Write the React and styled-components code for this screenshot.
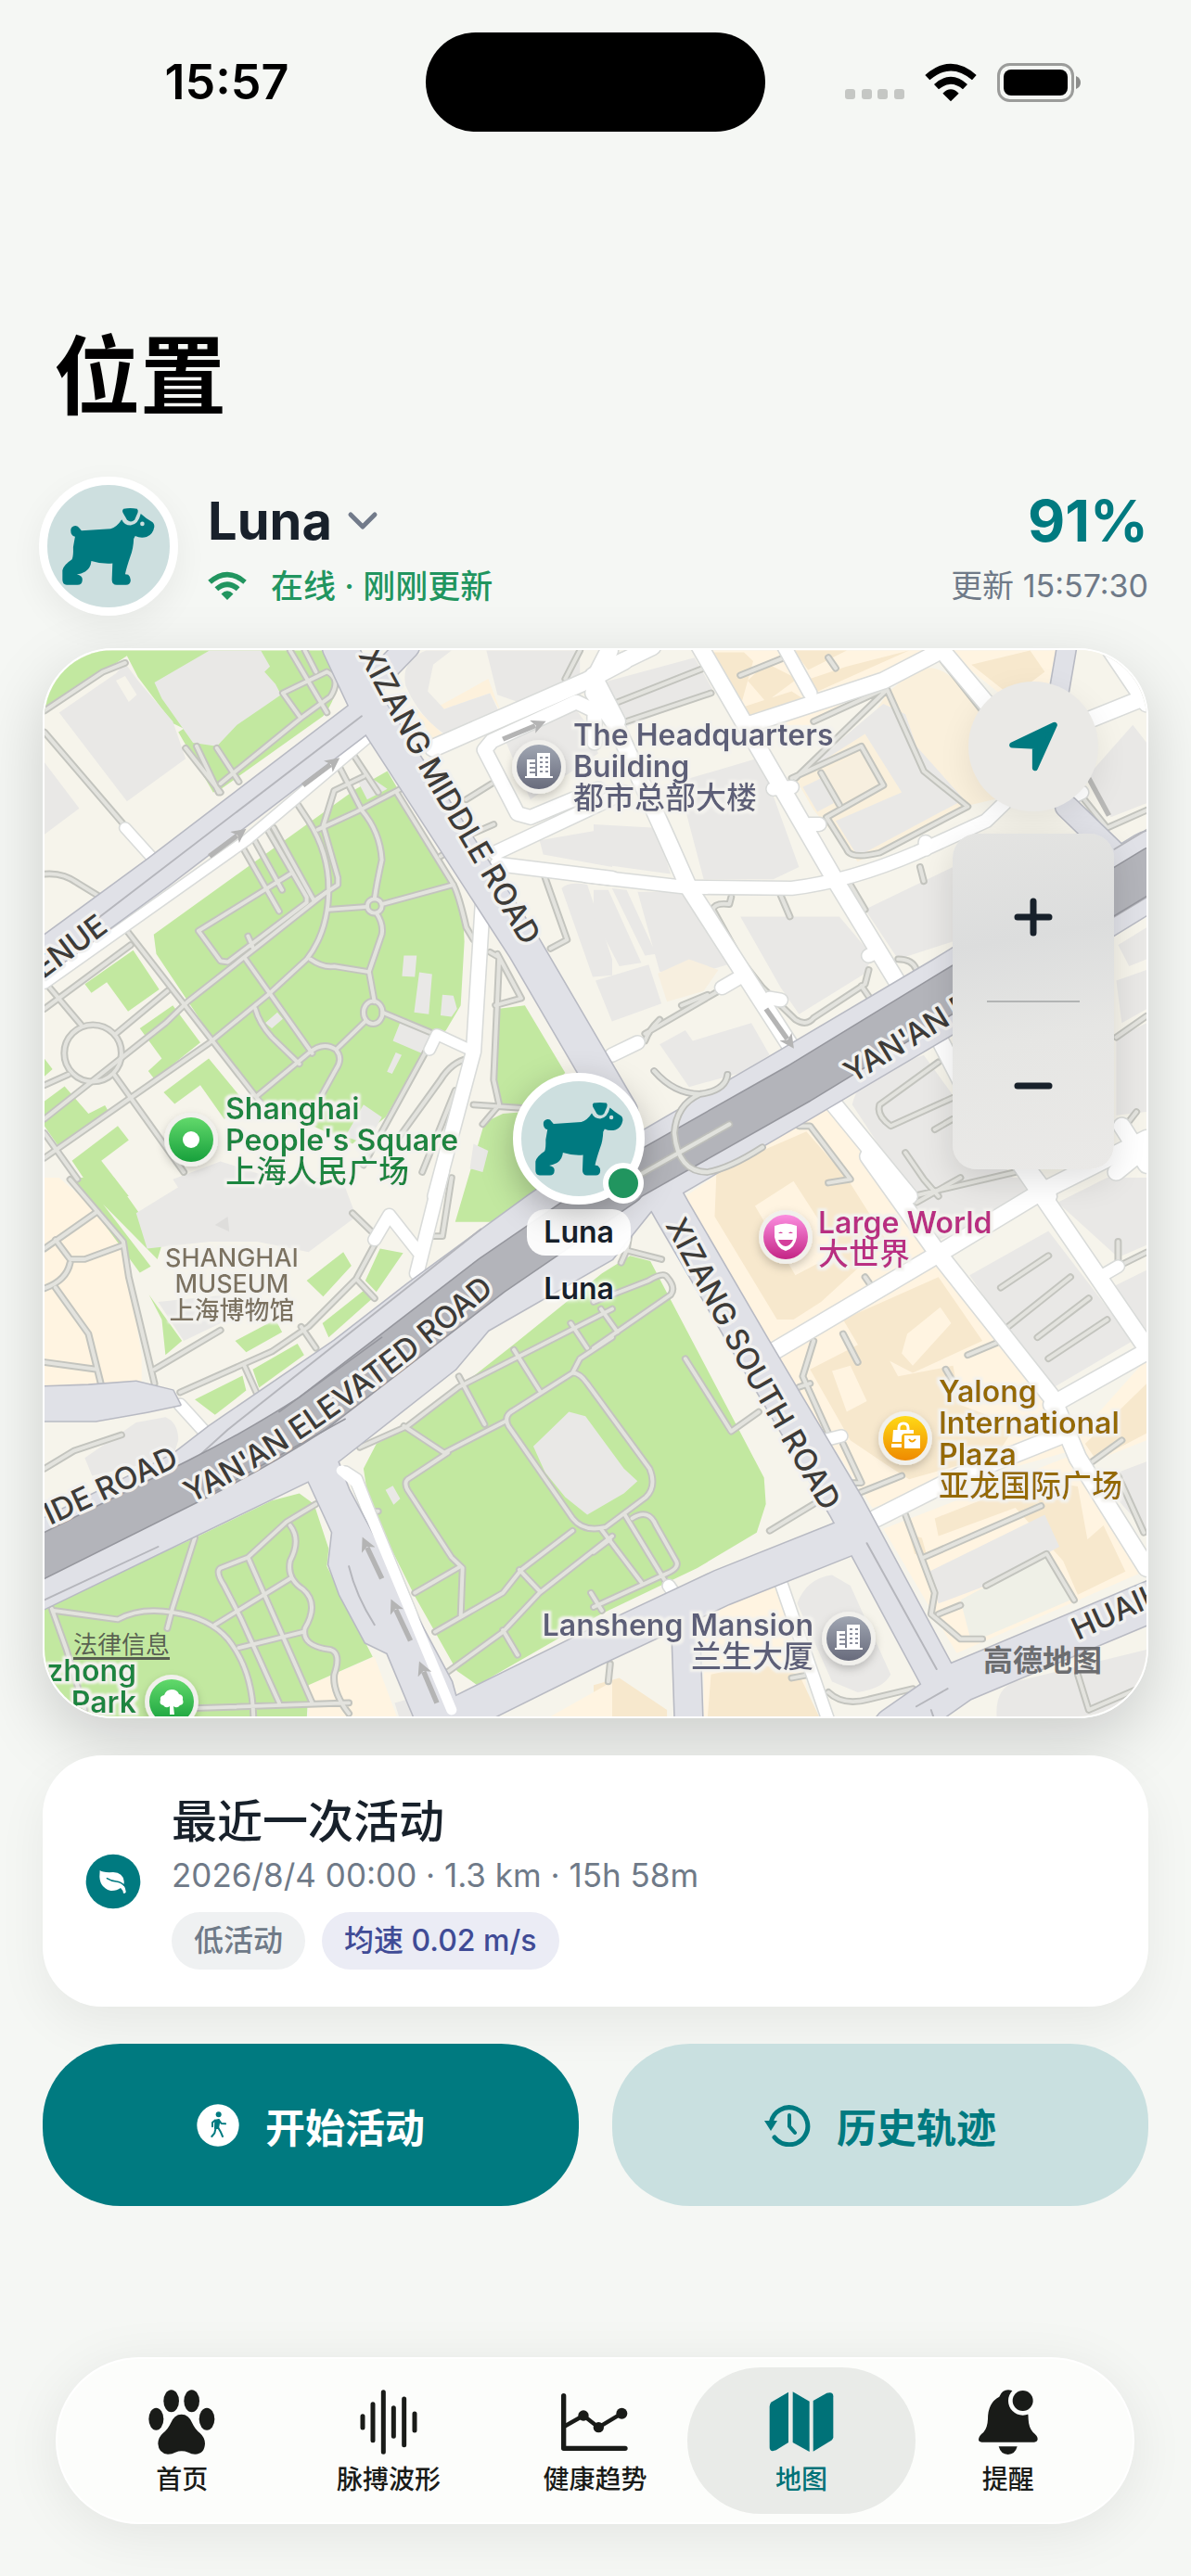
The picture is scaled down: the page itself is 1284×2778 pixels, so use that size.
import React from "react";
import styled, { createGlobalStyle } from "styled-components";

const colors = {
  background: "#f5f7f4",
  ink: "#18212b",
  muted: "#6f7a88",
  teal: "#007a80",
  tealSoft: "#c9e0e0",
  avatar: "#cddfdf",
  online: "#21955f",
  white: "#ffffff",
};

const GlobalStyle = createGlobalStyle`
  * {
    box-sizing: border-box;
  }

  body {
    margin: 0;
    background: ${colors.background};
    font-family: Inter, "Noto Sans CJK SC", sans-serif;
    color: ${colors.ink};
  }

  button {
    font: inherit;
    color: inherit;
    border: none;
    padding: 0;
    background: none;
    cursor: pointer;
  }

  a {
    color: inherit;
    text-decoration: none;
  }

  svg {
    display: block;
    flex: none;
  }
`;

const Page = styled.div`
  display: flex;
  flex-direction: column;
  min-height: 100vh;
  padding-bottom: 56px;
`;

const StatusBar = styled.header`
  display: grid;
  grid-template-columns: 1fr 366px 1fr;
  align-items: center;
  padding-top: 35px;
`;

const Clock = styled.time`
  padding-left: 30px;
  text-align: center;
  font-size: 52px;
  line-height: 60px;
  font-weight: 600;
  color: #000;
`;

const Island = styled.div`
  height: 107px;
  border-radius: 54px;
  background: #000;
`;

const StatusIcons = styled.div`
  display: flex;
  align-items: flex-end;
  justify-content: flex-end;
  gap: 22px;
  padding-right: 118px;
  color: #000;
`;

const Title = styled.h1`
  margin: 0;
  padding: 198px 58px 0;
  font-size: 93px;
  line-height: 132px;
  font-weight: 700;
  color: #000;
`;

const Content = styled.main`
  display: flex;
  flex-direction: column;
  gap: 40px;
  padding: 42px 46px 0;
`;

const PetHeader = styled.section`
  display: flex;
  align-items: center;
  gap: 32px;
  margin: 0 0 -5px -4px;
`;

const Avatar = styled.div`
  position: relative;
  display: flex;
  align-items: center;
  justify-content: center;
  width: ${({ $size }) => $size}px;
  height: ${({ $size }) => $size}px;
  border: 9px solid ${colors.white};
  border-radius: 50%;
  background: ${colors.avatar};
  box-shadow: 0 12px 36px rgba(0, 0, 0, ${({ $shadow }) => $shadow});
`;

const PetInfo = styled.div`
  display: flex;
  flex-direction: column;
  align-items: ${({ $end }) => ($end ? "flex-end" : "flex-start")};
  flex: ${({ $end }) => ($end ? "none" : "1")};
  gap: 16px;
  padding-top: 6px;
`;

const NameButton = styled.button`
  display: flex;
  align-items: center;
  gap: 16px;
  font-size: 56px;
  line-height: 64px;
  font-weight: 700;
`;

const Online = styled.div`
  display: flex;
  align-items: center;
  gap: 26px;
  font-size: 35px;
  line-height: 44px;
  font-weight: 500;
  color: ${colors.online};
`;

const Battery = styled.strong`
  font-size: 62px;
  line-height: 64px;
  font-weight: 700;
  color: ${colors.teal};
`;

const Updated = styled.time`
  font-size: 34px;
  line-height: 44px;
  color: ${colors.muted};
`;

const MapCard = styled.section`
  position: relative;
  height: 1154px;
  overflow: hidden;
  border: 2px solid ${colors.white};
  border-radius: 76px;
  background: #f6f4eb;
`;

const MapShadow = styled.div`
  border-radius: 76px;
  box-shadow: 0 24px 70px rgba(0, 0, 0, 0.17);
`;

const MapSvg = styled.svg`
  width: 100%;
  height: 100%;
  font-family: Inter, "Noto Sans CJK SC", sans-serif;
`;

const MapControls = styled.div`
  position: absolute;
  top: 34px;
  right: 35px;
  display: flex;
  flex-direction: column;
  align-items: center;
  gap: 24px;
`;

const LocateButton = styled.button`
  display: flex;
  align-items: center;
  justify-content: center;
  width: 140px;
  height: 140px;
  border-radius: 50%;
  background: #eae9e6;
  color: ${colors.teal};
  box-shadow: 0 12px 36px rgba(0, 0, 0, 0.08);
`;

const ZoomPanel = styled.div`
  display: flex;
  flex-direction: column;
  align-items: center;
  width: 174px;
  border-radius: 26px;
  background: linear-gradient(170deg, #e4e4e2, #dcdddd 32%, #e6e6e4 60%, #eae9e7);
  box-shadow: 0 12px 36px rgba(0, 0, 0, 0.12);
`;

const ZoomButton = styled.button`
  display: flex;
  align-items: center;
  justify-content: center;
  width: 100%;
  height: 180px;
`;

const ZoomDivider = styled.div`
  width: 100px;
  height: 2px;
  background: #b2b4b4;
`;

const PetMarker = styled.div`
  position: absolute;
  top: 456px;
  left: 48.5%;
  display: flex;
  flex-direction: column;
  align-items: center;
  transform: translateX(-50%);
  font-size: 32px;
  line-height: 50px;
  font-weight: 600;
`;

const MarkerDot = styled.span`
  position: absolute;
  right: -8px;
  bottom: -8px;
  width: 44px;
  height: 44px;
  border: 6px solid ${colors.white};
  border-radius: 50%;
  background: ${colors.online};
`;

const MarkerPill = styled.span`
  margin: 5px 0 11px;
  padding: 0 18px;
  border-radius: 20px;
  background: rgba(255, 255, 255, 0.94);
`;

const MarkerName = styled.span`
  text-shadow: 0 0 4px #fff, 0 0 4px #fff, 0 0 6px #fff, 0 0 6px #fff;
`;

const LegalLink = styled.a`
  position: absolute;
  left: 31px;
  bottom: 58px;
  font-size: 26px;
  line-height: 38px;
  color: rgba(60, 60, 60, 0.8);
  text-decoration: underline;
  text-decoration-thickness: 3px;
  text-underline-offset: 4px;
`;

const MapBrand = styled.span`
  position: absolute;
  right: 48px;
  bottom: 38px;
  font-size: 32px;
  line-height: 44px;
  font-weight: 700;
  color: #6c6d70;
`;

const ActivityCard = styled.section`
  display: flex;
  align-items: center;
  gap: 33px;
  padding: 40px 46px;
  border-radius: 64px;
  background: ${colors.white};
  box-shadow: 0 20px 54px rgba(0, 0, 0, 0.06);
`;

const ActivityBody = styled.div`
  display: flex;
  flex-direction: column;
`;

const ActivityTitle = styled.h2`
  margin: 0;
  font-size: 49px;
  line-height: 64px;
  font-weight: 500;
`;

const ActivityMeta = styled.p`
  margin: 0 0 14px;
  font-size: 35px;
  line-height: 51px;
  color: ${colors.muted};
`;

const Tags = styled.div`
  display: flex;
  gap: 18px;
`;

const Tag = styled.span`
  padding: 0 24px;
  border-radius: 31px;
  font-size: 32px;
  line-height: 62px;
  font-weight: 500;
  color: ${({ $accent }) => ($accent ? "#404b96" : colors.muted)};
  background: ${({ $accent }) => ($accent ? "#ebecf5" : "#eff1f2")};
`;

const Actions = styled.div`
  display: grid;
  grid-template-columns: 1fr 1fr;
  gap: 36px;
`;

const ActionButton = styled.button`
  display: flex;
  align-items: center;
  justify-content: center;
  gap: 28px;
  height: 175px;
  border-radius: 84px;
  font-size: 43px;
  font-weight: 700;
  color: ${({ $primary }) => ($primary ? colors.white : colors.teal)};
  background: ${({ $primary }) => ($primary ? colors.teal : colors.tealSoft)};
`;

const TabBar = styled.nav`
  display: flex;
  margin: auto 61px 0 60px;
  padding: 0 23px;
  border: 2px solid ${colors.white};
  border-radius: 90px;
  background: #fcfdfb;
  box-shadow: 0 10px 60px rgba(0, 0, 0, 0.08);
`;

const Tab = styled.a`
  position: relative;
  z-index: 0;
  display: flex;
  flex: 1;
  flex-direction: column;
  align-items: center;
  gap: 8px;
  padding: 33px 0 27px;
  font-size: 28px;
  line-height: 38px;
  font-weight: 500;
  color: ${({ $active }) => ($active ? "#007278" : "#191b18")};

  &::before {
    content: "";
    position: absolute;
    inset: 9px -12px;
    z-index: -1;
    border-radius: 79px;
    background: ${({ $active }) => ($active ? "#e9ebe8" : "transparent")};
  }
`;

/* ---------- icons ---------- */

const Dog = ({ width = 100 }) => (
  <svg width={width} viewBox="110 140 302 256" fill={colors.teal}>
    <path d="M138 216A15 15 0 0 1 166 208L173 216L268 210Q288 205 304 180Q312 199 333 199Q358 196 366 161Q385 178 400 186Q411 192 410 204Q406 228 385 237Q365 242 348 234L343 243Q342 275 332 300Q320 335 315 358L325 360Q333 366 333 378Q332 393 318 393H288Q272 392 272 376L274 323Q240 326 205 315Q203 338 185 350Q172 357 158 359Q176 362 176 376Q175 393 160 393H125Q111 391 111 376V345Q115 328 142 310Q147 300 146 270L152 236Q138 232 138 216Z" />
    <path d="M310 145Q332 141 354 145Q359 150 356 158L346 181Q334 193 321 181L308 158Q304 150 310 145Z" />
    <circle cx="371" cy="194" r="7" fill={colors.avatar} />
  </svg>
);

const Wifi = ({ width }) => (
  <svg width={width} viewBox="590 80 168 125" fill="currentColor">
    <path d="M591 119Q674 46 757 119L743 135Q674 76 606 135Z" />
    <path d="M620 149Q674 100 728 149L713 165Q674 132 635 165Z" />
    <path d="M648 178Q674 152 700 178L674 204Z" />
  </svg>
);

const Signal = () => (
  <svg width="64" height="14" viewBox="0 0 64 14" fill="#c5c7c4">
    {[0, 18, 35, 53].map((x) => (
      <rect key={x} x={x} width="11" height="11" rx="3" />
    ))}
  </svg>
);

const BatteryIcon = () => (
  <svg width="91" height="42" viewBox="0 0 91 42">
    <rect x="1.5" y="1.5" width="80" height="39" rx="12" fill="none" stroke="#9b9c9a" strokeWidth="3" />
    <rect x="7" y="7" width="69" height="28" rx="8" />
    <path d="M85 14Q90 16 90 21T85 28Z" fill="#8c8d8b" />
  </svg>
);

const Chevron = () => (
  <svg width="34" height="22" viewBox="0 0 34 22" fill="none" stroke="#727b8a" strokeWidth="5" strokeLinecap="round" strokeLinejoin="round">
    <path d="M4 4L17 17L30 4" />
  </svg>
);

const Arrow = () => (
  <svg width="54" height="54" viewBox="1126 230 142 142" fill="currentColor" stroke="currentColor" strokeWidth="16" strokeLinejoin="round">
    <path d="M1137 297L1257 240L1202 362V300Z" />
  </svg>
);

const Plus = ({ minus }) => (
  <svg width="42" height="42" viewBox="0 0 42 42" stroke={colors.ink} strokeWidth="7" strokeLinecap="round">
    <path d={minus ? "M4 21H38" : "M4 21H38M21 4V38"} />
  </svg>
);

const Leaf = () => (
  <svg width="60" height="60" viewBox="94 57 180 180">
    <circle cx="184" cy="147" r="88" fill={colors.teal} />
    <path d="M141 111Q150 119 184 117Q216 119 219 146Q220 152 217 158Q226 170 225 182Q220 187 217 185Q216 175 208 168Q195 178 176 177Q142 168 140 132Z" fill="#fff" />
    <path d="M164 137Q178 146 194 147Q210 149 219 160" fill="none" stroke={colors.teal} strokeWidth="4" strokeLinecap="round" />
  </svg>
);

const Walker = () => (
  <svg width="46" height="46" viewBox="461 871 138 138" fill="none" strokeLinecap="round" strokeLinejoin="round">
    <circle cx="530" cy="940" r="68" fill="#fff" />
    <circle cx="532" cy="905" r="9" fill={colors.teal} />
    <path d="M521 923L533 921L534 932L531 950H520Z" fill={colors.teal} stroke={colors.teal} strokeWidth="4" />
    <path d="M531 948L538 960L545 976M522 952L519 965L510 976M520 924L512 931V944M533 923L541 934L554 935" stroke={colors.teal} strokeWidth="6" />
  </svg>
);

const History = () => (
  <svg width="50" height="46" viewBox="0 0 50 46" fill="none" stroke="currentColor" strokeWidth="5" strokeLinecap="round">
    <path d="M7 21A20 20 0 1 1 11 36" />
    <path d="M27 12V24L33 31" strokeWidth="4" />
    <path d="M0 18H14L7 29Z" fill="currentColor" stroke="none" />
  </svg>
);

const Paw = () => (
  <svg width="72" height="70" viewBox="62 51 214 210" fill="currentColor">
    <ellipse cx="86" cy="146" rx="24" ry="36" />
    <ellipse cx="135" cy="88" rx="25" ry="36" />
    <ellipse cx="201" cy="88" rx="25" ry="36" />
    <ellipse cx="250" cy="146" rx="25" ry="36" />
    <path d="M168 131Q192 131 203 160Q212 180 228 192Q244 206 244 226Q242 260 212 260Q200 260 190 254Q168 246 148 254Q138 260 124 260Q94 258 92 226Q92 206 108 192Q124 180 133 160Q144 131 168 131Z" />
  </svg>
);

const Pulse = () => (
  <svg width="72" height="70" viewBox="731 50 216 210" stroke="currentColor" strokeWidth="15" strokeLinecap="round">
    <path d="M755 136V173M788 97V214M822 58V252M855 109V201M889 80V229M923 128V182" />
  </svg>
);

const Trend = () => (
  <svg width="72" height="70" viewBox="1399 50 216 210" fill="none" stroke="currentColor" strokeLinecap="round" strokeLinejoin="round">
    <path d="M1407 70V240H1606" strokeWidth="16" />
    <path d="M1413 167L1471 134L1520 172L1595 127" strokeWidth="13" />
    <g fill="currentColor" stroke="none">
      <circle cx="1471" cy="134" r="17" />
      <circle cx="1520" cy="172" r="17" />
      <circle cx="1595" cy="127" r="18" />
    </g>
  </svg>
);

const MapIcon = () => (
  <svg width="72" height="70" viewBox="562 50 216 210" fill="currentColor">
    <path d="M628 58V221L588 246Q567 254 567 236V104Q567 95 574 90Z" />
    <path d="M642 57L696 88V251L642 221Z" />
    <path d="M708 86L752 61Q773 55 773 72V204Q773 210 767 214L708 250Z" />
  </svg>
);

const Bell = () => (
  <svg width="72" height="70" viewBox="1234 50 216 210" fill="currentColor">
    <path d="M1246 212Q1246 200 1262 188Q1275 172 1276 145Q1276 92 1313 73Q1322 51 1342 51Q1362 51 1370 73Q1407 95 1407 145Q1408 172 1422 188Q1437 200 1437 210Q1436 220 1426 220H1256Q1246 219 1246 212Z" />
    <path d="M1311 234H1371Q1364 260 1341 260Q1318 260 1311 234Z" />
    <circle cx="1389" cy="86" r="47" fill="#fcfdfb" />
    <circle cx="1389" cy="86" r="33" />
  </svg>
);

/* ---------- map data, split in four sheets ---------- */

const sheets = {
  nw: "translate(-8 -11) scale(0.3954 0.3827)",
  ne: "translate(592 -11) scale(0.3954 0.3827)",
  sw: "translate(-8 569) scale(0.3954 0.3827)",
  se: "translate(592 569) scale(0.3954 0.3827)",
};

const GREEN = "#c2e8a0";
const GREY = "#e9e8e6";
const CREAM = "#fff4e1";
const SAND = "#f7e8cd";

// [sheet, fill, outline]
const areas = [
  ["nw", GREEN, "M20 30H420L275 105L245 45L20 200ZM275 105L410 30H780L820 110Q815 170 780 215L495 425L480 430L385 260L400 250L370 235Z"],
  ["nw", GREEN, "M318 830L870 420L955 370L1130 680Q1165 760 1165 850L1155 1030L1115 1100L1055 1160L950 1345L860 1420L590 1295L325 885Z"],
  ["nw", GREEN, "M130 970L262 875L333 985L248 1047L190 965L148 995ZM280 1095L370 1030L445 1135L320 1238L303 1215L340 1180ZM345 1275L468 1180L580 1320L510 1350L445 1255L375 1308Z"],
  ["nw", GREEN, "M20 1300L75 1258L140 1335L185 1312L198 1335L65 1437L20 1370ZM95 1468L220 1370L250 1410L175 1468L250 1568H160ZM20 1180L42 1210L20 1230Z"],
  ["nw", GREEN, "M1255 1040L1330 1030L1440 1220L1330 1320L1260 1310L1240 1240ZM1220 1360L1270 1335L1330 1330L1400 1560L1290 1640H1140Z"],
  ["nw", GREY, "M60 205L215 95L240 65L275 115L370 230L405 335L245 455ZM320 120L470 30H610L635 75L620 90L650 125L665 155L545 240L490 300L425 290L340 165ZM20 345L115 475L20 548Z"],
  ["nw", "#f6f4eb", "M215 115L240 102L272 155L250 175Z"],
  ["nw", GREY, "M1000 890H1035L1030 950L995 948ZM1042 937L1077 942L1068 1055L1028 1050ZM1105 1000L1135 1003L1145 1040L1130 1062L1100 1058ZM990 1078L1072 1112L1048 1165L970 1130ZM978 1163L994 1170L968 1223L954 1217ZM875 400L905 385L955 420L900 450ZM622 1080L655 1050L670 1068L640 1095Z"],
  ["nw", "#fdf1dc", "M1090 190L1230 110L1265 205L1235 150L1110 195ZM1020 180L1110 270L1085 290Z"],
  ["nw", GREY, "M1005 130Q990 60 1060 30H1130L1080 70L1065 145L1110 195L1235 150L1260 205L1160 260L1110 265Q1040 215 1005 130ZM1225 30H1480V105L1325 180L1255 155ZM1275 280L1465 190L1500 240L1530 320L1345 450ZM1370 565L1568 530V640L1380 605ZM1430 700Q1450 680 1500 690L1568 900V945L1515 950Z"],
  ["nw", GREY, "M890 1310L940 1345L900 1420L840 1400ZM1190 1420L1230 1440L1215 1500L1180 1490ZM370 1520L500 1470L800 1568H400Z"],
  ["ne", CREAM, "M310 30H930L790 100L590 240L420 240ZM960 30H1260L1240 130L1130 170Z"],
  ["ne", SAND, "M320 35H410L435 60L400 190ZM470 65L555 110L470 175L420 115ZM405 190L540 145L570 165L420 235ZM545 30H690L585 85ZM590 110L690 75L860 30L600 150ZM1030 70L1190 30L1230 90L1140 160Z"],
  ["ne", "#faf0dc", "M550 390L740 250L800 150L870 90Q930 60 980 110L1080 230L1130 440L1010 470L720 625L600 480Z"],
  ["ne", GREY, "M25 120L275 50L330 150L75 250ZM230 400L460 330L490 440L560 640L490 675H300ZM550 390L790 180L850 210L880 300L1010 450L720 610L660 510L840 430L740 265Z"],
  ["ne", GREY, "M570 415L620 390L655 460L610 485ZM0 520L170 530L210 660L0 630ZM400 780L670 780L760 890L740 940L560 1055L510 980ZM740 760L980 640V850L830 900ZM0 705H40L130 910L70 920L0 780ZM50 700L90 705L170 885L140 890ZM120 710H240L365 915L270 945L180 935Z"],
  ["ne", "#f7efdf", "M620 375L740 305L790 400L670 465ZM175 940L260 900L340 930L300 990L200 1020Z"],
  ["ne", GREY, "M5 960L150 915L185 1025L50 1075ZM180 1140L250 1100L270 1130L430 1080L480 1170L400 1220L260 1260ZM705 1310Q720 1240 790 1210L900 1170L1180 1568H870ZM1350 380L1470 240L1508 290V460L1410 500ZM1430 860L1508 810V900L1460 920ZM1425 960L1508 930V1040L1440 1080ZM1425 1120L1508 1080V1330L1425 1340Z"],
  ["se", CREAM, "M240 60L630 -220L790 0L930 210L490 475ZM500 510L950 240L1100 460L1250 620L1300 770L760 930ZM790 990L1310 780L1500 1110L990 1340ZM300 1220L500 1150L560 1260L590 1530H300ZM1310 740L1508 510V740L1360 800Z"],
  ["se", SAND, "M335 -20L580 -130L690 0L800 180L620 350L545 400H500L330 110ZM680 400L940 280L1060 460L870 550L720 470ZM590 540L770 445L830 560L980 530L1000 640L1150 700L1100 780L860 850L800 810L700 740Z"],
  ["se", CREAM, "M440 80L545 10L670 210L550 275ZM650 545L700 530L745 630L690 660ZM840 495L855 440L945 365L975 410L870 530Z"],
  ["se", SAND, "M930 960L1200 850L1320 870L1350 1040L1280 1080L1150 930L940 1010ZM1280 1080L1390 980L1450 1110L1320 1175ZM860 1005L895 1015L910 1070L875 1060ZM0 1430L70 1410L200 1500V1530H0ZM320 1400L450 1370L560 1400L620 1530H310ZM1340 750L1508 580V720L1370 795Z"],
  ["se", GREY, "M915 1110L1230 950L1270 1040L1070 1150L940 1200ZM840 0H1190L1210 60L930 180ZM1025 275L1240 150L1470 460L1240 600ZM1265 70L1400 0H1508V190L1430 225ZM1410 310L1508 260V450ZM1380 850L1508 800V1000ZM555 1200Q580 1130 650 1120L700 1150L810 1400Q790 1440 720 1450L650 1420ZM1100 1530Q1090 1440 1150 1420L1508 1330V1530Z"],
  ["se", "#eff0e7", "M1000 1190L1235 1060L1300 1190L1030 1310Z"],
  ["sw", CREAM, "M20 0H60L165 95L235 190L285 500V590H20ZM740 1430L920 1350L985 1530H740ZM1380 1530L1568 1420V1530Z"],
  ["sw", GREEN, "M890 820L925 750L1010 705L1140 600L1300 470L1540 270L1617 220L1672 235L1982 845L1987 920L1962 1000L1800 1100L1537 1230L1200 1430L1145 1390L1030 1180L905 920Z"],
  ["sw", GREEN, "M0 1220L430 1015L640 910L715 890L755 920L795 1045L790 1095L830 1180L895 1310L915 1350L740 1430L735 1530H0Z"],
  ["sw", GREEN, "M735 290L835 210L857 248L780 335ZM895 290L935 200L998 212L925 322ZM778 410L900 310L915 340L795 450ZM540 460L650 400L668 435L570 492ZM588 540L710 468L728 500L605 592ZM430 625L560 558L570 600L485 668ZM90 0H210L340 190L328 230L180 75L310 250L280 268ZM305 330L395 460L350 500L340 400Z"],
  ["sw", GREY, "M1353 757L1450 660L1495 672L1600 820L1637 855L1600 890L1500 950L1440 900L1385 830ZM270 100L380 30L430 0H830L870 110L740 210L600 180H470L300 200ZM330 350L520 330L500 410L400 460ZM130 790L270 690L350 675Q385 690 385 740L370 790L150 840ZM950 880L970 868L990 905L972 922ZM975 1480L1010 1470L1030 1530H990Z"],
  ["sw", "#dedddb", "M485 133L520 110L524 152Z"],
];

const footways = [
  ["nw", "M20 260L240 525M20 200L180 90L240 65M20 660Q70 655 110 685L165 720M245 820L640 1345M20 1040L255 860M30 975L120 1085M20 1255L85 1225M20 1350L350 1080L410 1020L570 890L790 710M355 990L215 1110M20 1460L468 1137L630 1000L735 900Q795 820 795 700Q795 600 740 510L705 455M210 1225L400 1500M20 1390L110 1520"],
  ["nw", "M74 1165A78 80 0 1 1 230 1165A78 80 0 1 1 74 1165M900 750A20 20 0 1 1 940 750A20 20 0 1 1 900 750M890 1050A26 32 0 1 1 942 1050A26 32 0 1 1 890 1050"],
  ["nw", "M735 740L520 908L500 905L440 820L690 660M735 740V725L620 520M555 575L660 765M585 550L668 705M645 530L755 735L820 690V670L780 525L810 425L890 385M575 835L590 870M765 535L870 485L1000 415M860 320L930 430M820 350L885 480Q935 540 940 620Q925 690 920 730M925 770Q945 800 940 830L905 935L920 1020M795 760L900 752M940 745L1135 690"],
  ["nw", "M745 900Q780 925 810 920L900 935M942 1050L1070 1105M895 1075L815 1155Q780 1130 740 1165L600 1285M815 1155Q835 1180 815 1210L775 1285M565 895L750 1165M595 1040Q605 1080 640 1120L715 1195M980 430L1135 690Q1150 720 1170 810L1190 845"],
  ["nw", "M1235 880L1260 895L1245 1240L1260 1310L1215 1365M1255 885L1320 1010L1250 1030M1190 1310L1330 1320M1170 450L1240 405M1190 545L1245 520M1100 610L1130 590M1385 670L1445 845L1400 870M1175 1180Q1130 1190 1100 1240L960 1440M1140 1270L1050 1500M1060 1160L890 1480"],
  ["nw", "M405 305L500 430M435 300L495 430M490 305L550 400M500 405L720 220L800 160Q830 110 790 90L670 150L715 215M690 30L790 205M730 30L760 90M1480 30L1440 110"],
  ["ne", "M55 180L300 80M60 240L320 150M400 100L520 50M550 390L800 140L900 370L1020 470L780 600Q700 620 690 590L635 500L790 410L730 300L540 390M620 375L670 465M790 140L600 230M930 30L1060 200M890 640L900 680M700 690L740 760M510 720L535 780M375 725L370 745Q330 740 325 760L400 900L460 980L550 1070Q580 1090 600 1065L740 970L750 930M730 975L760 1020M140 1130Q150 1100 180 1070M140 1110L340 990M240 1030L310 1000M830 900Q870 900 880 930M640 50L660 80"],
  ["ne", "M780 1310Q770 1340 810 1370L980 1290M780 1310L940 1190M930 1380L980 1350M850 1445L900 1520L940 1568M870 1568L1150 1500M640 1530L700 1520L590 1370L560 1370M1425 1120L1508 1060M1480 1330L1450 1370M1330 440L1400 530L1508 480"],
  ["se", "M20 370L65 435M0 480L210 330Q225 310 200 280Q190 265 150 290L0 350M75 240L90 205L185 230M90 205L110 80M250 510L375 715L450 660M480 995L600 920M85 950L200 1145M20 990L130 1140M105 960Q150 930 170 980L225 1080Q235 1100 200 1115L0 1210M45 1020L0 1055M680 440L720 520M600 460L570 560L640 720M560 590L590 580M680 750L730 860L700 860M720 890L840 840M1020 500L1100 465"],
  ["se", "M850 950L930 1170L920 1230L1000 1300L1060 1300M900 1070L1220 925M940 1230L1000 1205M1070 1150L1235 1060L1310 1190M1110 310L1240 220M1130 420L1300 280M1210 450L1350 340M1240 510L1400 400M880 70L1000 0M740 280L760 310M960 540L1000 610M1360 800L1440 740M1430 840L1500 1000M45 1370L40 1420M540 1410L590 1400M640 1450Q680 1490 750 1470L870 1440M1320 1400L1350 1500L1508 1430M1430 180V250L1508 210"],
  ["sw", "M20 200L165 95M50 175L90 230H130L235 190M90 5L235 180L250 280L320 580M90 240Q80 290 20 312M50 310L140 440L175 585M20 520L160 540M390 605L640 490L740 420L870 285L930 170M860 100L930 170M320 540L500 430M870 285L920 340M720 420L760 480M565 530L600 610M20 820L100 770L230 725M1130 0L1105 165H1080"],
  ["sw", "M430 1015L370 1210L355 1270M45 1220L220 1245Q280 1210 370 1225Q470 1240 520 1300Q590 1390 590 1530M40 1215L80 1330L130 1500M760 920L680 970L575 1070L500 1100Q485 1110 510 1150L555 1240L660 1480M575 1070L750 1480M690 980Q720 1020 690 1080Q680 1130 725 1160Q770 1200 730 1270Q720 1320 800 1330Q830 1340 810 1400Q805 1450 850 1510M485 1260L690 1130M550 1325L725 1280M430 1495L850 1480"],
  ["sw", "M880 760L1010 700L1150 590L1568 370M1000 700L1110 775L1280 685M1150 560L1220 695M1300 485L1370 600M1455 410L1500 480M1568 450L1480 510L1460 550L1300 655Q1270 670 1285 700L1460 960Q1490 1000 1550 985L1660 900Q1690 870 1670 820L1500 580Q1480 550 1460 550"],
  ["sw", "M1120 775L1010 850Q1000 860 1010 880L1130 1070L1160 1100L1155 1235M1030 1170L1155 1095M1085 1280L1270 1170L1320 1105L1460 995M1110 1400L1270 1280L1370 1170L1568 1010M1315 1105L1370 1165M1270 1275L1310 1345M1510 1170L1540 1220M870 940H930M1160 1480L1568 1270"],
];

// [sheet, width, outline]
const streets = [
  ["nw", 28, "M20 968L570 565L905 272"],
  ["nw", 46, "M1080 305L1500 115L1600 60M1520 110L1560 30M1520 110L1580 230"],
  ["nw", 38, "M1250 600L1600 430M1255 632L1568 672M1345 500L1310 490L1220 310L1240 285L1470 175L1520 200V290M1345 500L1530 420M1215 740L1190 1160L1085 1568"],
  ["nw", 28, "M1070 1155L1090 1112L1180 1155M240 530L310 610"],
  ["ne", 44, "M0 100L160 20M290 20L660 680L840 985M420 240L790 115L930 40M950 30L1080 190M0 150L60 240L200 560L260 700L540 1150M1340 230L1508 160M1410 30L1508 180M640 1290L860 1568"],
  ["ne", 36, "M-20 665L250 697L540 700Q700 680 880 600L1070 510L1120 460M520 20L590 150M350 980L400 950M480 1010L510 1015M50 1170L120 1135M490 420L540 415M590 520L615 520M905 570V590M750 890L770 880M1310 440L1330 430"],
  ["ne", 44, "M920 1080L1000 1240L1240 1568M1425 1500L1508 1430M1440 1370L1508 1480"],
  ["se", 46, "M490 490L940 215L1220 40L1508 -110M750 -60L940 215L1250 620L1320 790L1508 1100M1130 -90L1190 0L1508 480M1250 640L1508 490M770 960L1000 840L1290 720"],
  ["se", 32, "M630 740L675 728M510 1140L640 1530M1380 280L1430 250M205 1150L215 1165"],
  ["sw", 32, "M840 830L870 850L900 930L1130 1510M390 640L460 720M920 175L960 105L1040 210"],
  ["sw", 36, "M1105 -20L1035 270"],
];

const avenues = [
  ["nw", 92, "M0 905L330 655L900 205"],
  ["nw", 62, "M880 160L1010 20"],
  ["nw", 92, "M825 20L900 185L1330 870L1590 1330"],
  ["ne", 50, "M1290 20L1270 140"],
  ["ne", 60, "M1290 470L1440 620"],
  ["ne", 205, "M40 1560L530 1265L980 990L1530 640"],
  ["se", 98, "M120 -80L215 95L432 480L690 930L950 1430"],
  ["se", 100, "M-400 1530L0 1325L350 1155L690 1015"],
  ["se", 112, "M820 1550L1000 1420L1530 1190"],
  ["se", 74, "M250 1240L260 1550"],
];

const avenueAreas =
  "M0 970L370 780L470 700L810 460L1010 300L1340 50L1568 -110L1700 60L1568 230L1230 430L1140 540L820 800L850 880L1130 1420L1165 1550H1040L955 1340L895 1310L825 1175L795 1090L805 1000L740 855L430 1010L20 1215H0ZM0 590L140 585L270 575L370 600L390 640L300 660L160 685H0Z";

const elevated = [
  ["ne", "M30 1560L560 1250L980 985L1530 640"],
  ["sw", "M-20 1085L440 848Q600 765 750 665L1240 275L1600 20"],
];

const arrows = [
  ["nw", "M470 610L545 552"],
  ["nw", "M725 410L800 352"],
  ["nw", "M1270 280L1358 242"],
  ["ne", "M470 1040L528 1125"],
  ["sw", "M940 1130L900 1042"],
  ["sw", "M1018 1305L978 1217"],
  ["sw", "M1090 1480L1054 1392"],
];

const roadNames = [
  { id: "xizang-middle", text: "XIZANG MIDDLE ROAD", d: "M338 5L414 146L522 330L562 400" },
  { id: "xizang-south", text: "XIZANG SOUTH ROAD", d: "M669 620L751 776L871 985" },
  { id: "elevated", text: "YAN'AN ELEVATED ROAD", d: "M158 920Q312 845 542 642" },
  { id: "elevated-east", text: "YAN'AN EL", d: "M871 468L1188 275" },
  { id: "avenue", text: "ENUE", d: "M-260 548L70 302", end: true },
  { id: "side", text: "IDE ROAD", d: "M-200 1040L146 879", end: true },
  { id: "huaihai", text: "HUAIH", d: "M1114 1068L1330 970" },
];

const places = [
  { kind: "office", x: 533, y: 126, tx: 570, ty: 103, color: "#5d5f78", lines: ["The Headquarters", "Building", "都市总部大楼"] },
  { kind: "square", x: 158, y: 528, tx: 195, ty: 506, color: "#1f8540", lines: ["Shanghai", "People's Square", "上海人民广场"] },
  { kind: "theatre", x: 799, y: 633, tx: 834, ty: 629, color: "#b92f82", lines: ["Large World", "大世界"] },
  { kind: "shop", x: 928, y: 850, tx: 964, ty: 811, color: "#956b00", lines: ["Yalong", "International", "Plaza", "亚龙国际广场"] },
  { kind: "office", x: 867, y: 1066, tx: 829, ty: 1063, anchor: "end", color: "#5d5f78", lines: ["Lansheng Mansion", "兰生大厦"] },
  { kind: "park", x: 137, y: 1134, tx: 99, ty: 1112, anchor: "end", color: "#1f8540", lines: ["zhong", "Park"] },
];

const pinColors = {
  office: ["#a0a6b2", "#686b7c"],
  square: ["#62d96b", "#17a03c"],
  park: ["#62d96b", "#17a03c"],
  theatre: ["#fb8ee0", "#c42585"],
  shop: ["#ffd916", "#ef8a00"],
};

const pinGlyphs = {
  office: (
    <g>
      <path d="M-15 12V10H-13V-8H-4V10H-2V-15H12V10H15V12Z" fill="#fff" />
      <path d="M-10 -4H-4M-10 1H-4M-10 6H-4M1 -10H4M7 -10H10M1 -5H4M7 -5H10M1 0H4M7 0H10M1 5H4M7 5H10" stroke="#8a8e9c" strokeWidth="2" />
    </g>
  ),
  square: <circle r="9" fill="#fff" />,
  park: (
    <path d="M-2 14V5Q-6 8 -9 4Q-14 3 -12 -2Q-13 -6 -8 -7Q-6 -13 0 -13Q6 -13 8 -8Q13 -7 12 -2Q14 3 9 4Q6 8 2 5L3 14Z" fill="#fff" />
  ),
  theatre: (
    <g>
      <path d="M-12 -12Q0 -17 12 -12V0Q10 12 0 15Q-10 12 -12 0Z" fill="#fff" />
      <path d="M-8 -4Q-5 -7 -3 -4ZM3 -4Q5 -7 8 -4ZM-8 3H8Q5 10 0 10T-8 3Z" fill="#d43f9b" />
    </g>
  ),
  shop: (
    <g>
      <path d="M-7 -8V-11Q-7 -16 -2 -16T3 -11V-8" fill="none" stroke="#fff" strokeWidth="3" />
      <path d="M-13 -9H9V-5H0Q-4 -5 -4 -1V4H-14ZM-15 6H-4V10H-15ZM-1 -3H16V11H-1Z" fill="#fff" />
      <path d="M4 1Q7 6 11 1" fill="none" stroke="#f5a000" strokeWidth="2" />
    </g>
  ),
};

const Pin = ({ kind, x, y }) => (
  <g transform={`translate(${x} ${y})`}>
    <circle r="29" fill="#f1f0ec" filter="url(#soft)" />
    <circle r="24" fill={`url(#pin-${kind})`} />
    {pinGlyphs[kind]}
  </g>
);

const Strokes = ({ items, extra, color }) =>
  items.map(([sheet, width, d], index) => (
    <path key={index} transform={sheets[sheet]} d={d} stroke={color} strokeWidth={width + extra} />
  ));

const isChinese = (text) => text.charCodeAt(0) > 255;

const CityMap = () => (
  <MapSvg viewBox="0 0 1188 1150" preserveAspectRatio="xMidYMid slice" role="img" aria-label="地图">
    <defs>
      <filter id="soft" x="-50%" y="-50%" width="200%" height="200%">
        <feDropShadow dx="0" dy="4" stdDeviation="5" floodOpacity="0.2" />
      </filter>
      {/* pale outline behind a whole label, so lines never cover each other */}
      <filter id="halo" x="-10%" y="-20%" width="120%" height="140%">
        <feMorphology in="SourceAlpha" operator="dilate" radius="3" result="wide" />
        <feGaussianBlur in="wide" stdDeviation="1" result="edge" />
        <feFlood floodColor="#f3f2ee" />
        <feComposite in2="edge" operator="in" result="outline" />
        <feMerge>
          <feMergeNode in="outline" />
          <feMergeNode in="SourceGraphic" />
        </feMerge>
      </filter>
      <marker id="head" viewBox="0 0 20 20" refX="4" refY="10" markerWidth="44" markerHeight="40" markerUnits="userSpaceOnUse" orient="auto">
        <path d="M0 0L20 10L0 20L5 10Z" fill="#b4b4b4" />
      </marker>
      {Object.entries(pinColors).map(([kind, [from, to]]) => (
        <linearGradient key={kind} id={`pin-${kind}`} x2="0" y2="1">
          <stop stopColor={from} />
          <stop offset="1" stopColor={to} />
        </linearGradient>
      ))}
      {roadNames.map(({ id, d }) => (
        <path key={id} id={id} d={d} />
      ))}
    </defs>

    <rect width="1188" height="1150" fill="#f6f4eb" />
    {areas.map(([sheet, fill, d], index) => (
      <path key={index} transform={sheets[sheet]} d={d} fill={fill} />
    ))}

    <g fill="none" strokeLinejoin="round" strokeLinecap="round">
      <Strokes items={footways.map(([s, d]) => [s, 10, d])} extra={10} color="#c3c4be" />
      <Strokes items={footways.map(([s, d]) => [s, 10, d])} extra={0} color="#e3e3de" />
      <Strokes items={streets} extra={8} color="#d9dbd9" />
      <Strokes items={streets} extra={0} color="#ffffff" />
      <Strokes items={avenues} extra={8} color="#b8bac3" />
      <path transform={sheets.sw} d={avenueAreas} stroke="#b8bac3" strokeWidth="8" />
      <Strokes items={avenues} extra={0} color="#e0e1e7" />
      <path transform={sheets.sw} d={avenueAreas} fill="#e0e1e7" />
      {/* one-way lane beside the avenue */}
      <path transform={sheets.sw} d="M830 825L870 860L900 930L1130 1500" stroke="#ffffff" strokeWidth="28" />
      {/* lane lines */}
      <g stroke="#b5b6bc" strokeWidth="5">
        <path transform={sheets.nw} d="M165 785L885 215" />
        <path transform={sheets.sw} d="M440 785L520 710L1210 145M20 1190L330 1040M850 1095Q870 1180 920 1260" />
        <path transform={sheets.se} d="M745 1030L935 1385M880 1490L965 1440M920 1500L930 1530" />
        <path transform={sheets.ne} d="M1420 590L1508 535M1420 780L1508 725" />
      </g>
      <Strokes items={elevated.map(([s, d]) => [s, 112, d])} extra={8} color="#96979e" />
      <Strokes items={elevated.map(([s, d]) => [s, 112, d])} extra={0} color="#b3b4ba" />
      <path transform={sheets.sw} d="M440 910L840 680M660 660L940 450" stroke="#96979e" strokeWidth="4" />
      <g transform={sheets.ne}>
        {[["#bdbeba", 20], ["#e1e2dd", 11]].map(([color, width]) => (
          <path key={color} stroke={color} strokeWidth={width} d="M370 1365L130 1505M165 1215Q220 1280 290 1280Q360 1270 365 1225M290 1280Q225 1310 220 1390Q230 1500 310 1500Q370 1490 460 1430" />
        ))}
      </g>
      <path transform={sheets.ne} d="M1350 390L1405 495" stroke="#b9b9b7" strokeWidth="14" strokeLinecap="butt" />
      <g stroke="#b4b4b4" strokeWidth="14" strokeLinecap="butt">
        {arrows.map(([sheet, d], index) => (
          <path key={index} transform={sheets[sheet]} d={d} markerEnd="url(#head)" />
        ))}
      </g>
    </g>

    <g fontSize="33" fontWeight="500" fill="#3d3b38" stroke="#f1f1f0" strokeWidth="7" strokeLinejoin="round" paintOrder="stroke">
      {roadNames.map(({ id, text, end }) => (
        <text key={id} textAnchor={end ? "end" : "start"}>
          <textPath href={`#${id}`} startOffset={end ? "100%" : "0"}>
            {text}
          </textPath>
        </text>
      ))}
    </g>

    <g fontSize="27" fontWeight="500" textAnchor="middle" fill="#7b7261" filter="url(#halo)">
      <text x="202" y="665">SHANGHAI</text>
      <text x="202" y="693">MUSEUM</text>
      <text x="202" y="722">上海博物馆</text>
    </g>

    {places.map(({ tx, ty, anchor = "start", color, lines }) => (
      <g key={lines.join()} fill={color} textAnchor={anchor} filter="url(#halo)">
        {lines.map((line, index) => (
          <text
            key={line}
            x={tx}
            y={ty + index * 34}
            fontWeight={isChinese(line) ? 500 : 600}
            fontSize={isChinese(line) ? 33 : 32}
          >
            {line}
          </text>
        ))}
      </g>
    ))}
    {places.map(({ kind, x, y }) => (
      <Pin key={`${x}-${y}`} kind={kind} x={x} y={y} />
    ))}
  </MapSvg>
);

const tabs = [
  { label: "首页", icon: <Paw /> },
  { label: "脉搏波形", icon: <Pulse /> },
  { label: "健康趋势", icon: <Trend /> },
  { label: "地图", icon: <MapIcon />, active: true },
  { label: "提醒", icon: <Bell /> },
];

const App = () => {
  return (
    <Page>
      <GlobalStyle />
      <StatusBar>
        <Clock>15:57</Clock>
        <Island />
        <StatusIcons>
          <Signal />
          <Wifi width={56} />
          <BatteryIcon />
        </StatusIcons>
      </StatusBar>

      <Title>位置</Title>

      <Content>
        <PetHeader>
          <Avatar $size={150} $shadow={0.06}>
            <Dog />
          </Avatar>
          <PetInfo>
            <NameButton type="button">
              Luna
              <Chevron />
            </NameButton>
            <Online>
              <Wifi width={42} />
              在线 · 刚刚更新
            </Online>
          </PetInfo>
          <PetInfo $end>
            <Battery>91%</Battery>
            <Updated>更新 15:57:30</Updated>
          </PetInfo>
        </PetHeader>

        <MapShadow>
          <MapCard>
            <CityMap />
            <LegalLink href="#legal">法律信息</LegalLink>
            <MapBrand>高德地图</MapBrand>
            <PetMarker>
              <Avatar $size={142} $shadow={0.25}>
                <Dog width={95} />
                <MarkerDot />
              </Avatar>
              <MarkerPill>Luna</MarkerPill>
              <MarkerName>Luna</MarkerName>
            </PetMarker>
            <MapControls>
              <LocateButton type="button" aria-label="定位">
                <Arrow />
              </LocateButton>
              <ZoomPanel>
                <ZoomButton type="button" aria-label="放大">
                  <Plus />
                </ZoomButton>
                <ZoomDivider />
                <ZoomButton type="button" aria-label="缩小">
                  <Plus minus />
                </ZoomButton>
              </ZoomPanel>
            </MapControls>
          </MapCard>
        </MapShadow>

        <ActivityCard>
          <Leaf />
          <ActivityBody>
            <ActivityTitle>最近一次活动</ActivityTitle>
            <ActivityMeta>2026/8/4 00:00 · 1.3 km · 15h 58m</ActivityMeta>
            <Tags>
              <Tag>低活动</Tag>
              <Tag $accent>均速 0.02 m/s</Tag>
            </Tags>
          </ActivityBody>
        </ActivityCard>

        <Actions>
          <ActionButton type="button" $primary>
            <Walker />
            开始活动
          </ActionButton>
          <ActionButton type="button">
            <History />
            历史轨迹
          </ActionButton>
        </Actions>
      </Content>

      <TabBar>
        {tabs.map(({ label, icon, active }) => (
          <Tab key={label} href={`#${label}`} $active={active} aria-current={active ? "page" : undefined}>
            {icon}
            {label}
          </Tab>
        ))}
      </TabBar>
    </Page>
  );
};

export default App;
